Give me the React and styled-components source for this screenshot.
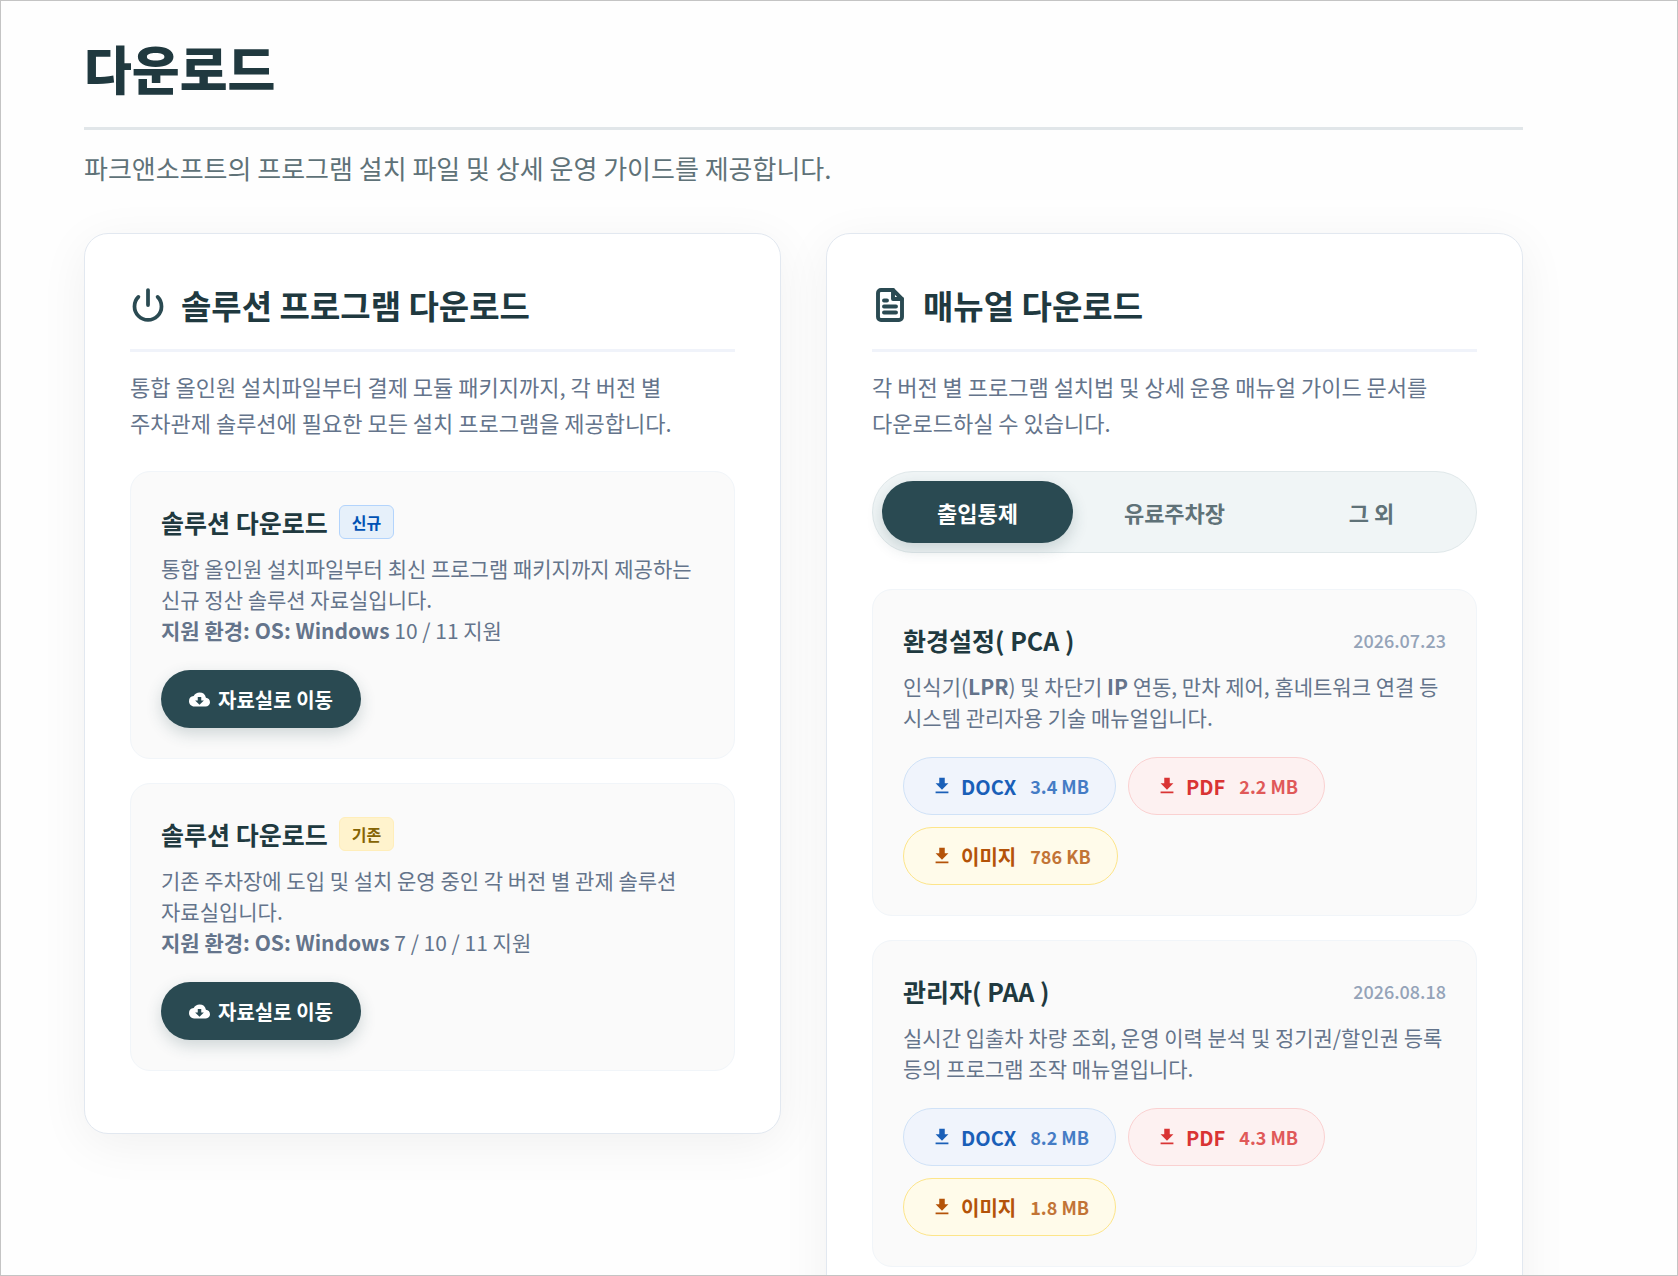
import React, { useState } from "react";
import styled, { createGlobalStyle } from "styled-components";
import { MdCloudDownload, MdDownload } from "react-icons/md";

const Global = createGlobalStyle`
  *, *::before, *::after { box-sizing: border-box; }
  body {
    margin: 0;
    background: #fefefe;
    color: #20393f;
    font-family: "Noto Sans CJK KR", "Noto Sans", sans-serif;
    word-break: keep-all;
  }
  h1, h2, h3, p, ul { margin: 0; padding: 0; }
`;

const Frame = styled.div`
  height: 100vh;
  overflow: hidden;
  border: 1px solid #c4c4c4;
`;

const Page = styled.main`
  max-width: 1522px;
  padding: 32px 0 0 83px;
`;

const PageTitle = styled.h1`
  padding-bottom: 24px;
  border-bottom: 3px solid #e1e6e9;
  font-size: 52px;
  font-weight: 800;
  line-height: 70px;
`;

const Lead = styled.p`
  margin: 19px 0 46px;
  color: #5f7278;
  font-size: 26px;
  line-height: 38px;
`;

const Columns = styled.div`
  display: grid;
  grid-template-columns: 1fr 1fr;
  align-items: start;
  gap: 45px;
`;

const Card = styled.section`
  padding: 45px 45px 62px;
  border: 1px solid #e2e8f0;
  border-radius: 24px;
  background: #fff;
  box-shadow: 0 10px 50px rgba(0, 0, 0, 0.06);
`;

const CardHead = styled.header`
  display: flex;
  align-items: center;
  gap: 15px;
  padding-bottom: 18px;
  border-bottom: 3px solid #f0f3fa;

  svg { width: 36px; height: 36px; color: #2a4a52; }
`;

const CardTitle = styled.h2`
  font-size: 33px;
  font-weight: 700;
  line-height: 52px;
`;

const CardText = styled.p`
  margin: 16px 0 31px;
  color: #64748b;
  font-size: 22px;
  line-height: 36px;
`;

const List = styled.ul`
  display: grid;
  gap: 24px;
  list-style: none;
`;

const Item = styled.li`
  padding: 30px;
  border: 1px solid #f1f5f9;
  border-radius: 20px;
  background: #fafafa;
`;

const ItemHead = styled.div`
  display: flex;
  align-items: center;
  justify-content: ${(p) => (p.$spread ? "space-between" : "flex-start")};
  gap: 11px;
  margin-bottom: 11px;
`;

const ItemTitle = styled.h3`
  font-size: 25px;
  font-weight: 700;
  line-height: 40px;
`;

const badgeTones = {
  new: "background: #e6f0fa; border-color: #b3d4fc; color: #0052b4;",
  old: "background: #fff3cd; border-color: #ffeeba; color: #856404;",
};

const Badge = styled.span`
  padding: 0 12px;
  border: 1px solid;
  border-radius: 6px;
  font-size: 16px;
  font-weight: 700;
  line-height: 32px;
  ${(p) => badgeTones[p.$tone]}
`;

const Stamp = styled.time`
  color: #94a3b8;
  font-size: 18px;
  font-weight: 500;
  line-height: 26px;
`;

const ItemText = styled.p`
  margin-bottom: 24px;
  color: #64748b;
  font-size: 21px;
  line-height: 31px;
`;

const GoLink = styled.a`
  display: inline-flex;
  align-items: center;
  gap: 8px;
  height: 58px;
  padding: 0 28px;
  border-radius: 50px;
  background: #2a4a52;
  box-shadow: 0 6px 16px rgba(42, 74, 82, 0.2);
  color: #fff;
  font-size: 20px;
  font-weight: 700;
  text-decoration: none;
  vertical-align: top;
`;

const Tabs = styled.div`
  display: grid;
  grid-template-columns: repeat(3, 1fr);
  gap: 6px;
  margin-bottom: 36px;
  padding: 9px;
  border: 1px solid #e0e8ea;
  border-radius: 50px;
  background: #f0f5f6;
`;

const Tab = styled.button`
  height: 62px;
  padding: 0;
  border: 0;
  border-radius: 50px;
  background: ${(p) => (p.$active ? "#2a4a52" : "transparent")};
  box-shadow: ${(p) => (p.$active ? "0 6px 16px rgba(42, 74, 82, 0.2)" : "none")};
  color: ${(p) => (p.$active ? "#fff" : "#5f7278")};
  font-family: inherit;
  font-size: 22px;
  font-weight: 700;
  cursor: pointer;
`;

const Files = styled.div`
  display: flex;
  flex-wrap: wrap;
  gap: 12px;
`;

const fileTones = {
  DOCX: "background: #f0f4fc; border-color: #d0e2f7; color: #1a5fb8;",
  PDF: "background: #fdf1f1; border-color: #fad1d1; color: #d93434;",
  이미지: "background: #fffbea; border-color: #fde58a; color: #b45309;",
};

const FileLink = styled.a`
  display: inline-flex;
  align-items: center;
  height: 58px;
  padding: 0 26px 0 27px;
  border: 1px solid;
  border-radius: 50px;
  font-size: 20px;
  font-weight: 700;
  text-decoration: none;
  ${(p) => fileTones[p.$kind]}

  svg { width: 22px; height: 22px; margin-right: 8px; }
`;

const FileSize = styled.span`
  margin-left: 14px;
  font-size: 18px;
  font-weight: 600;
  opacity: 0.8;
`;

const PowerIcon = () => (
  <svg viewBox="0 0 24 24" fill="none" stroke="currentColor" strokeWidth="2.5" strokeLinecap="round" aria-hidden="true">
    <path d="M12 2v10" />
    <path d="M18.4 6.6a9 9 0 1 1-12.8 0" />
  </svg>
);

const DocumentIcon = () => (
  <svg viewBox="0 0 24 24" fill="none" stroke="currentColor" strokeWidth="2.6" strokeLinecap="round" strokeLinejoin="round" aria-hidden="true">
    <path d="M14 2H6a2 2 0 0 0-2 2v16a2 2 0 0 0 2 2h12a2 2 0 0 0 2-2V8z" />
    <path d="M14 2v6h6M16 13H8M16 17H8M10 9H8" />
  </svg>
);

const solutions = [
  {
    tone: "new",
    label: "신규",
    text: "통합 올인원 설치파일부터 최신 프로그램 패키지까지 제공하는 신규 정산 솔루션 자료실입니다.",
    versions: "10 / 11 지원",
  },
  {
    tone: "old",
    label: "기존",
    text: "기존 주차장에 도입 및 설치 운영 중인 각 버전 별 관제 솔루션 자료실입니다.",
    versions: "7 / 10 / 11 지원",
  },
];

const manuals = [
  {
    title: "환경설정( PCA )",
    date: "2026.07.23",
    text: (
      <>
        인식기(<b>LPR</b>) 및 차단기 <b>IP</b> 연동, 만차 제어, 홈네트워크 연결 등 시스템 관리자용 기술 매뉴얼입니다.
      </>
    ),
    files: [["DOCX", "3.4 MB"], ["PDF", "2.2 MB"], ["이미지", "786 KB"]],
  },
  {
    title: "관리자( PAA )",
    date: "2026.08.18",
    text: "실시간 입출차 차량 조회, 운영 이력 분석 및 정기권/할인권 등록 등의 프로그램 조작 매뉴얼입니다.",
    files: [["DOCX", "8.2 MB"], ["PDF", "4.3 MB"], ["이미지", "1.8 MB"]],
  },
];

const tabNames = ["출입통제", "유료주차장", "그 외"];

export default function App() {
  const [tab, setTab] = useState(tabNames[0]);
  return (
    <Frame>
      <Global />
      <Page>
        <PageTitle>다운로드</PageTitle>
        <Lead>파크앤소프트의 프로그램 설치 파일 및 상세 운영 가이드를 제공합니다.</Lead>
        <Columns>
          <Card>
            <CardHead>
              <PowerIcon />
              <CardTitle>솔루션 프로그램 다운로드</CardTitle>
            </CardHead>
            <CardText>
              통합 올인원 설치파일부터 결제 모듈 패키지까지, 각 버전 별 주차관제 솔루션에 필요한 모든 설치 프로그램을 제공합니다.
            </CardText>
            <List>
              {solutions.map((s) => (
                <Item key={s.tone}>
                  <ItemHead>
                    <ItemTitle>솔루션 다운로드</ItemTitle>
                    <Badge $tone={s.tone}>{s.label}</Badge>
                  </ItemHead>
                  <ItemText>
                    {s.text}
                    <br />
                    <b>지원 환경: OS: Windows</b> {s.versions}
                  </ItemText>
                  <GoLink href="#">
                    <MdCloudDownload size={21} aria-hidden="true" />
                    자료실로 이동
                  </GoLink>
                </Item>
              ))}
            </List>
          </Card>
          <Card>
            <CardHead>
              <DocumentIcon />
              <CardTitle>매뉴얼 다운로드</CardTitle>
            </CardHead>
            <CardText>
              각 버전 별 프로그램 설치법 및 상세 운용 매뉴얼 가이드 문서를 다운로드하실 수 있습니다.
            </CardText>
            <Tabs role="tablist">
              {tabNames.map((name) => (
                <Tab key={name} type="button" role="tab" aria-selected={tab === name} $active={tab === name} onClick={() => setTab(name)}>
                  {name}
                </Tab>
              ))}
            </Tabs>
            <List>
              {manuals.map((m) => (
                <Item key={m.title}>
                  <ItemHead $spread>
                    <ItemTitle>{m.title}</ItemTitle>
                    <Stamp>{m.date}</Stamp>
                  </ItemHead>
                  <ItemText>{m.text}</ItemText>
                  <Files>
                    {m.files.map(([kind, size]) => (
                      <FileLink key={kind} href="#" $kind={kind}>
                        <MdDownload aria-hidden="true" />
                        {kind}
                        <FileSize>{size}</FileSize>
                      </FileLink>
                    ))}
                  </Files>
                </Item>
              ))}
            </List>
          </Card>
        </Columns>
      </Page>
    </Frame>
  );
}
